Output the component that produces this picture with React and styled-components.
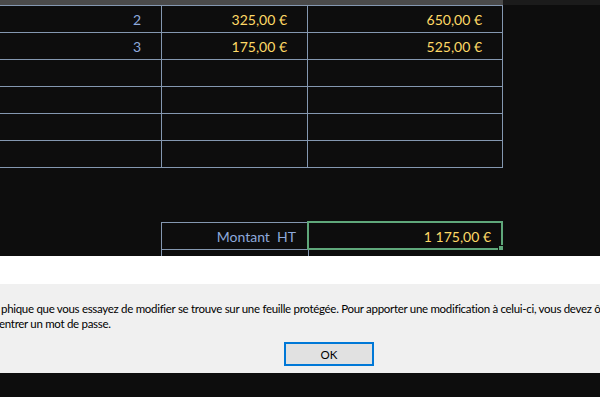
import React from "react";
import styled, { createGlobalStyle } from "styled-components";

const Global = createGlobalStyle`
  html, body { margin: 0; padding: 0; background: #0d0d0d; }
  body { width: 600px; height: 397px; overflow: hidden; }
  #root { width: 600px; height: 397px; }
`;

const Page = styled.div`
  width: 600px;
  height: 397px;
  display: flex;
  flex-direction: column;
  background: #0d0d0d;
  overflow: hidden;
`;

const Sheet = styled.div`
  height: 256px;
  flex: none;
  display: flex;
  flex-direction: column;
  overflow: hidden;
  font-family: "Lato", "Liberation Sans", sans-serif;
  font-size: 14px;
`;

const TopStrip = styled.div`
  height: 5px;
  display: flex;
  flex: none;
`;

const StripPart = styled.div`
  width: ${(p) => p.$w}px;
  flex: ${(p) => (p.$w ? "none" : "1")};
  background: ${(p) => p.$bg};
`;

const Grid = styled.div`
  display: grid;
  grid-template-columns: 162px 146px 195px;
  border-top: 1px solid #8497b0;
  width: 503px;
`;

const Cell = styled.div`
  box-sizing: border-box;
  height: 27px;
  border-right: 1px solid #8497b0;
  border-bottom: 1px solid #8497b0;
  border-left: ${(p) => (p.$left ? "1px solid #8497b0" : "none")};
  display: flex;
  align-items: center;
  justify-content: flex-end;
  padding-right: ${(p) => p.$pr ?? 20}px;
  color: ${(p) => (p.$tone === "gold" ? "#ffd966" : "#8ea9db")};
  white-space: pre;
  position: relative;
`;

const TotalGrid = styled.div`
  margin-top: 54px;
  margin-left: 161px;
  display: grid;
  grid-template-columns: 147px 195px;
  border-top: 1px solid #8497b0;
  width: 342px;
`;

const Selection = styled.div`
  position: absolute;
  left: -1px;
  top: -2px;
  right: -1px;
  bottom: -1px;
  border: 2px solid #5fa77a;
  pointer-events: none;
`;

const Handle = styled.div`
  position: absolute;
  right: -3px;
  bottom: -3px;
  width: 4px;
  height: 4px;
  background: #5fa77a;
  border: 1px solid #0d0d0d;
  box-sizing: content-box;
`;

const NextRow = styled.div`
  display: grid;
  grid-template-columns: 147px 195px;
  margin-left: 161px;
  height: 6px;
`;

const Stub = styled.div`
  border-left: 1px solid #8497b0;
`;

const Dialog = styled.div`
  flex: none;
  display: flex;
  flex-direction: column;
  font-family: "Lato", "Liberation Sans", sans-serif;
  font-size: 11.5px;
  color: #000;
`;

const WhiteBand = styled.div`
  height: 28px;
  background: #ffffff;
`;

const Body = styled.div`
  height: 89px;
  background: #f0f0f0;
  display: flex;
  flex-direction: column;
  overflow: hidden;
`;

const Message = styled.div`
  padding-top: 17px;
  display: flex;
  flex-direction: column;
  line-height: 15px;
  letter-spacing: -0.3px;
  overflow: hidden;
`;

const Line = styled.div`
  white-space: nowrap;
  margin-left: ${(p) => p.$ml}px;
`;

const Buttons = styled.div`
  display: flex;
  padding-left: 284px;
  padding-top: 11px;
`;

const OkButton = styled.button`
  width: 90px;
  height: 24px;
  box-sizing: border-box;
  background: #e1e1e1;
  border: 2px solid #0078d7;
  font-family: "Lato", "Liberation Sans", sans-serif;
  font-size: 11.5px;
  color: #000;
  padding: 0;
`;

const rows = [
  ["2", "325,00 €", "650,00 €"],
  ["3", "175,00 €", "525,00 €"],
  ["", "", ""],
  ["", "", ""],
  ["", "", ""],
  ["", "", ""],
];

export default function App() {
  return (
    <Page>
      <Global />
      <Sheet>
        <TopStrip>
          <StripPart $w={503} $bg="#4a4a4a" />
          <StripPart $bg="#1b1b1b" />
        </TopStrip>
        <Grid>
          {rows.map((r, i) => (
            <React.Fragment key={i}>
              <Cell>{r[0]}</Cell>
              <Cell $tone="gold">{r[1]}</Cell>
              <Cell $tone="gold">{r[2]}</Cell>
            </React.Fragment>
          ))}
        </Grid>
        <TotalGrid>
          <Cell $left $pr={11}>{"Montant  HT"}</Cell>
          <Cell $tone="gold" $pr={11}>
            1 175,00 €
            <Selection>
              <Handle />
            </Selection>
          </Cell>
        </TotalGrid>
        <NextRow>
          <Stub />
          <Stub />
        </NextRow>
      </Sheet>
      <Dialog>
        <WhiteBand />
        <Body>
          <Message>
            <Line $ml={1}>
              phique que vous essayez de modifier se trouve sur une feuille protégée. Pour apporter une modification à celui-ci, vous devez ôter
            </Line>
            <Line $ml={-1}>entrer un mot de passe.</Line>
          </Message>
          <Buttons>
            <OkButton>OK</OkButton>
          </Buttons>
        </Body>
      </Dialog>
    </Page>
  );
}
